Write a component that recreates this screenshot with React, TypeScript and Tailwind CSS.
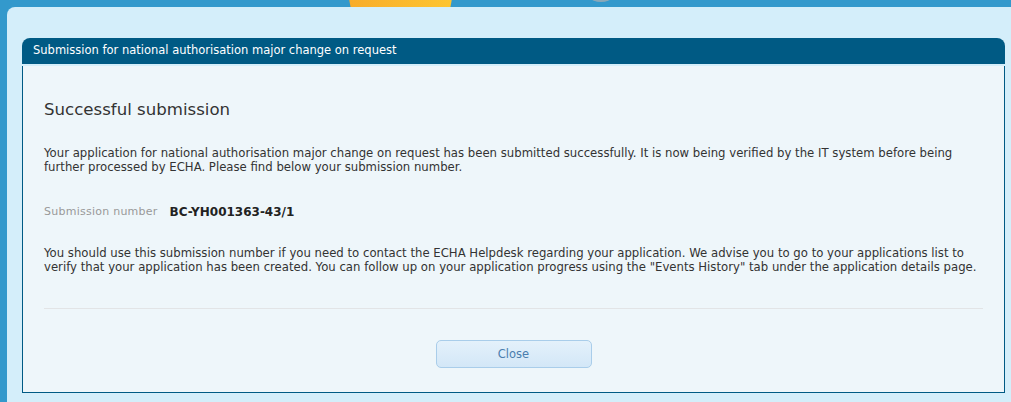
export default function App() {
  const font = { fontFamily: '"DejaVu Sans", Verdana, sans-serif' };
  return (
    <div className="w-[1011px] h-[402px] bg-[#3399cc] relative overflow-hidden" style={font}>
      <div className="absolute left-[349px] top-[-57px] w-[103px] h-[103px] rounded-full bg-gradient-to-r from-[#f8ac2a] to-[#fec530]" />
      <div className="absolute left-[581px] top-[-38px] w-[40px] h-[40px] rounded-full bg-[#8aa8b8]" />
      <div className="relative ml-[7px] mt-[7px] h-[395px] bg-[#d4eefa] rounded-tl-[8px] pt-[31px] pl-[15px] pr-[6px]">
        <div className="flex flex-col">
          <div className="h-[26px] bg-[#005a84] rounded-t-[8px] flex items-center pl-[11px] text-white text-[11.5px]">
            Submission for national authorisation major change on request
          </div>
          <div className="h-[2px]" />
          <div className="h-[327px] bg-[#eef6fa] border border-t-0 border-[#005a84] px-[21px] pt-[33px] text-[#333] text-[11.7px] leading-[14px]">
            <h1 className="text-[16.6px] leading-[22px] text-[#333]">Successful submission</h1>
            <p className="mt-[25px] whitespace-nowrap">
              <span className="block">Your application for national authorisation major change on request has been submitted successfully. It is now being verified by the IT system before being</span>
              <span className="block">further processed by ECHA. Please find below your submission number.</span>
            </p>
            <div className="mt-[31px] flex items-center gap-[12px]">
              <span className="text-[#999] text-[11px] tracking-[0.25px]">Submission number</span>
              <span className="font-bold text-[#222] text-[12px]">BC-YH001363-43/1</span>
            </div>
            <p className="mt-[27px] whitespace-nowrap">
              <span className="block">You should use this submission number if you need to contact the ECHA Helpdesk regarding your application. We advise you to go to your applications list to</span>
              <span className="block">verify that your application has been created. You can follow up on your application progress using the "Events History" tab under the application details page.</span>
            </p>
            <div className="mt-[34px] h-px bg-[#e2e4e6]" />
            <div className="flex justify-center mt-[31px]">
              <button className="w-[156px] h-[28px] rounded-[5px] border border-[#a9cdea] bg-gradient-to-b from-[#e4f1fb] to-[#d3e7f7] text-[#4a7eae] text-[11.5px]">
                Close
              </button>
            </div>
          </div>
        </div>
      </div>
    </div>
  );
}
